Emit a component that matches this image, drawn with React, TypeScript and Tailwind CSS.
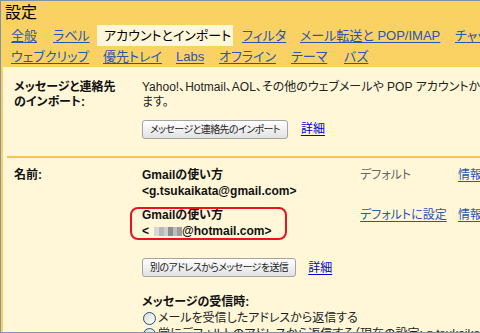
import React from "react";

const tabLink = "text-[#2a55b0] underline underline-offset-[2px]";
const blueLink = "text-[#0000cc] underline underline-offset-[2px]";
const btn =
  "h-[19px] px-[7px] text-[10px] tracking-[-0.6px] leading-[17px] text-[#222] border border-[#a3a3a3] rounded-[3px] bg-linear-to-b from-white to-[#e2e2e2] whitespace-nowrap";

function Radio({ checked }: { checked?: boolean }) {
  return (
    <span className="w-[13px] h-[13px] shrink-0 rounded-full border border-[#1c5180] bg-linear-to-br from-[#dcdcd4] to-white flex items-center justify-center">
      {checked && <span className="w-[5px] h-[5px] rounded-full bg-[#21a121]" />}
    </span>
  );
}

export default function App() {
  return (
    <div className="w-[480px] h-[333px] overflow-hidden bg-[#fad163] border-t border-l border-b border-[#8394a6] flex flex-col font-['Liberation_Sans','Noto_Sans_CJK_JP',sans-serif] text-[#222] [font-feature-settings:'palt']">
      <div className="pl-[4px] pt-[3px] text-[16px] leading-[18px] text-black">設定</div>

      <div className="mt-[3px] flex pl-[10px] text-[13px] leading-[21px] whitespace-nowrap">
        <span className="w-[42px] shrink-0"><a className={tabLink}>全般</a></span>
        <span className="w-[44px] shrink-0"><a className={tabLink}>ラベル</a></span>
        <span className="w-[136px] shrink-0 bg-[#fff7d7] pl-[7px] text-black">アカウントとインポート</span>
        <span className="w-[9px] shrink-0" />
        <span className="w-[58px] shrink-0"><a className={tabLink}>フィルタ</a></span>
        <span className="w-[155px] shrink-0"><a className={tabLink}>メール転送と POP/IMAP</a></span>
        <span className="shrink-0"><a className={tabLink}>チャット</a></span>
      </div>

      <div className="mt-[3px] flex pl-[10px] text-[13px] leading-[16px] whitespace-nowrap">
        <span className="w-[92px] shrink-0"><a className={tabLink}>ウェブクリップ</a></span>
        <span className="w-[73px] shrink-0"><a className={tabLink}>優先トレイ</a></span>
        <span className="w-[43px] shrink-0"><a className={tabLink}>Labs</a></span>
        <span className="w-[72px] shrink-0"><a className={tabLink}>オフライン</a></span>
        <span className="w-[53px] shrink-0"><a className={tabLink}>テーマ</a></span>
        <span className="shrink-0"><a className={tabLink}>バズ</a></span>
      </div>

      <div className="mt-[2px] flex-1 ml-[2px] bg-[#fff7d7] text-[12px]">
        <div className="flex pt-[13px] pb-[17px] pl-[11px]">
          <div className="w-[128px] shrink-0 font-bold leading-[15px] text-[#111]">
            メッセージと連絡先
            <br />
            のインポート:
          </div>
          <div className="leading-[15px]">
            <div className="whitespace-nowrap">
              Yahoo!、Hotmail、AOL、その他のウェブメールや POP アカウントからインポートし
            </div>
            <div>ます。</div>
            <div className="mt-[10px] flex items-center gap-[13px]">
              <button className={btn}>メッセージと連絡先のインポート</button>
              <a className={blueLink}>詳細</a>
            </div>
          </div>
        </div>

        <div className="ml-[4px] h-[2px] bg-[#f8c54c]" />

        <div className="flex pt-[9px] pl-[11px] leading-[16px]">
          <div className="w-[128px] shrink-0 font-bold text-[#111]">名前:</div>
          <div className="flex flex-col">
            <div className="flex whitespace-nowrap">
              <div className="w-[218px] shrink-0 font-bold text-[#111]">
                Gmailの使い方
                <br />
                &lt;g.tsukaikata@gmail.com&gt;
              </div>
              <div className="w-[98px] shrink-0 text-[#666]">デフォルト</div>
              <a className={tabLink}>情報</a>
            </div>

            <div className="mt-[8px] flex whitespace-nowrap">
              <div className="w-[218px] shrink-0 font-bold text-[#111] relative">
                Gmailの使い方
                <br />
                <span className="inline-flex items-center">
                  &lt;
                  <span className="ml-[5px] inline-flex h-[9px] items-stretch">
                    <span className="w-[5px] bg-[#d6d6d6]" />
                    <span className="w-[5px] bg-[#b9b9b9]" />
                    <span className="w-[4px] bg-[#cfcfcf]" />
                    <span className="w-[5px] bg-[#8e8e8e]" />
                    <span className="w-[4px] bg-[#bdbdbd]" />
                    <span className="w-[5px] bg-[#9d9d9d]" />
                  </span>
                  <span>@hotmail.com&gt;</span>
                </span>
                <span className="absolute left-[-12px] top-0 w-[157px] h-[33px] border-2 border-[#e8141b] rounded-[8px]" />
              </div>
              <div className="w-[98px] shrink-0">
                <a className={tabLink}>デフォルトに設定</a>
              </div>
              <a className={tabLink}>情報</a>
            </div>

            <div className="mt-[19px] flex items-center gap-[12px]">
              <button className={btn}>別のアドレスからメッセージを送信</button>
              <a className={blueLink}>詳細</a>
            </div>

            <div className="mt-[17px] font-bold text-[#111]">メッセージの受信時:</div>
            <div className="flex items-center gap-[2px] ml-[1px] whitespace-nowrap">
              <Radio />
              <span>メールを受信したアドレスから返信する</span>
            </div>
            <div className="flex items-center gap-[2px] ml-[1px] whitespace-nowrap">
              <Radio checked />
              <span>常にデフォルトのアドレスから返信する（現在の設定: g.tsukaikata@gmail.com）</span>
            </div>
          </div>
        </div>
      </div>
    </div>
  );
}
